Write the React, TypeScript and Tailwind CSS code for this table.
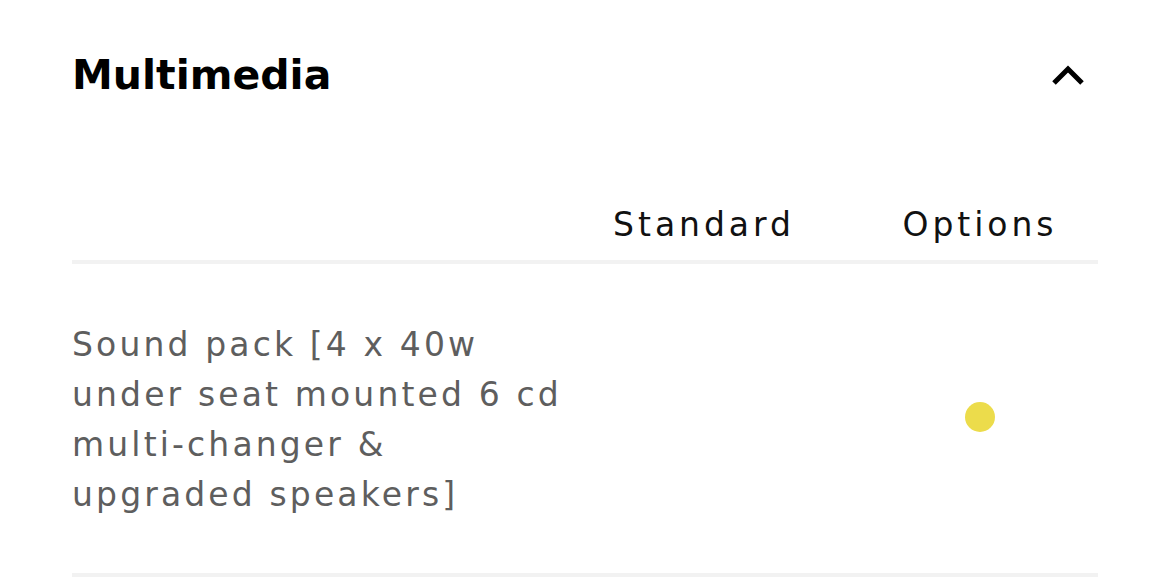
import React from 'react';

export default function App() {
  return (
    <div className="min-h-screen bg-white px-[72px] font-['DejaVu_Sans','Liberation_Sans',sans-serif]">
      {/* Section heading */}
      <div className="flex h-[150px] items-center justify-between">
        <h2 className="text-[41px] font-bold leading-none text-black">Multimedia</h2>
        <button className="mr-[10px] flex h-[36px] w-[40px] items-center justify-center" aria-label="Collapse">
          <svg width="36" height="26" viewBox="0 0 36 26" fill="none">
            <path d="M4 21 L18 7 L32 21" stroke="#000" strokeWidth="5" strokeLinecap="butt" strokeLinejoin="miter" />
          </svg>
        </button>
      </div>

      {/* Table header */}
      <div className="grid grid-cols-[500px_264px_1fr] border-b-4 border-[#f2f2f2] pt-[50px] pb-[10px] text-[33px] leading-[50px] tracking-[0.12em] text-[#111]">
        <div />
        <div className="text-center">Standard</div>
        <div className="pl-[26px] text-center">Options</div>
      </div>

      {/* Row */}
      <div className="grid grid-cols-[500px_264px_1fr] items-center border-b-4 border-[#f2f2f2] pt-[56px] pb-[53px]">
        <p className="text-[33px] leading-[50px] tracking-[0.095em] text-[#5e5e5e]">
          Sound pack [4 x 40w under seat mounted 6 cd multi-changer &amp; upgraded speakers]
        </p>
        <div />
        <div className="flex justify-center pl-[26px] pb-[6px]">
          <span className="block h-[30px] w-[30px] rounded-full bg-[#ecdc4b]" />
        </div>
      </div>
    </div>
  );
}
